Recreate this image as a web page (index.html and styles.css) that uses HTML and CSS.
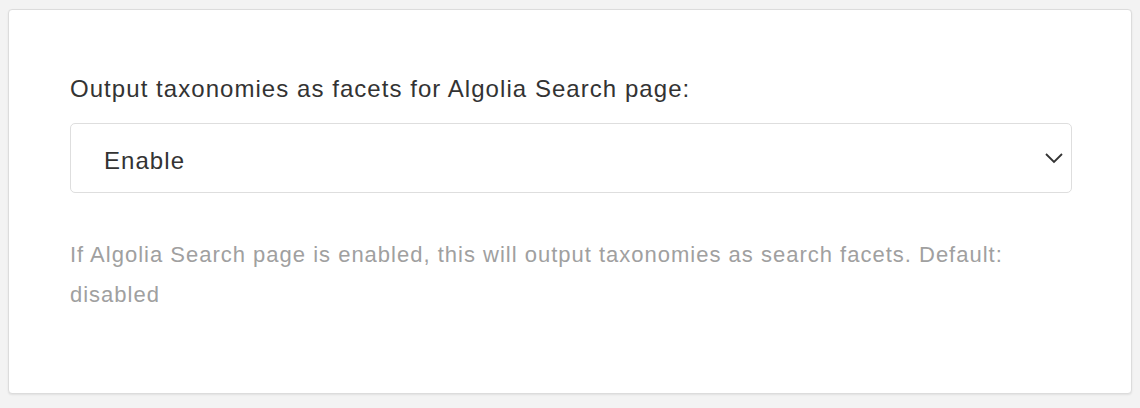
FILE: index.html
```html
<!DOCTYPE html>
<html>
<head>
<meta charset="utf-8">
<link rel="stylesheet" href="styles.css">
</head>
<body>
<div class="card">
  <label class="field-label">Output taxonomies as facets for Algolia Search page:</label>
  <div class="select">
    <span class="select-value">Enable</span>
    <svg class="chevron" width="18" height="11" viewBox="0 0 18 11"><path d="M1 1 L9 9 L17 1" fill="none" stroke="#333" stroke-width="1.8"/></svg>
  </div>
  <p class="help">If Algolia Search page is enabled, this will output taxonomies as search facets. Default: disabled</p>
</div>
</body>
</html>
```
FILE: styles.css
```css
html, body {
  margin: 0;
  padding: 0;
  background: #f3f3f3;
}
body {
  padding: 9px 8px 14px 8px;
  font-family: "Liberation Sans", Arial, sans-serif;
}
.card {
  box-sizing: border-box;
  width: 1124px;
  height: 385px;
  background: #fff;
  border: 1px solid #dcdcdc;
  border-radius: 4px;
  box-shadow: 0 1px 2px rgba(0,0,0,0.08);
  padding: 65px 61px 0 61px;
}
.field-label {
  display: block;
  font-size: 24px;
  letter-spacing: 1.05px;
  color: #333;
  line-height: 28px;
  margin-bottom: 20px;
}
.select {
  box-sizing: border-box;
  width: 1002px;
  height: 70px;
  border: 1.5px solid #dedede;
  border-radius: 5px;
  display: flex;
  align-items: center;
  justify-content: space-between;
  padding: 6px 8px 0 33px;
}
.select-value {
  font-size: 24px;
  letter-spacing: 1.05px;
  color: #333;
}
.chevron {
  display: block;
  margin-top: -6px;
}
.help {
  margin: 42px 0 0 0;
  font-size: 22px;
  letter-spacing: 1px;
  line-height: 40px;
  color: #a0a0a0;
  max-width: 1002px;
}
```
